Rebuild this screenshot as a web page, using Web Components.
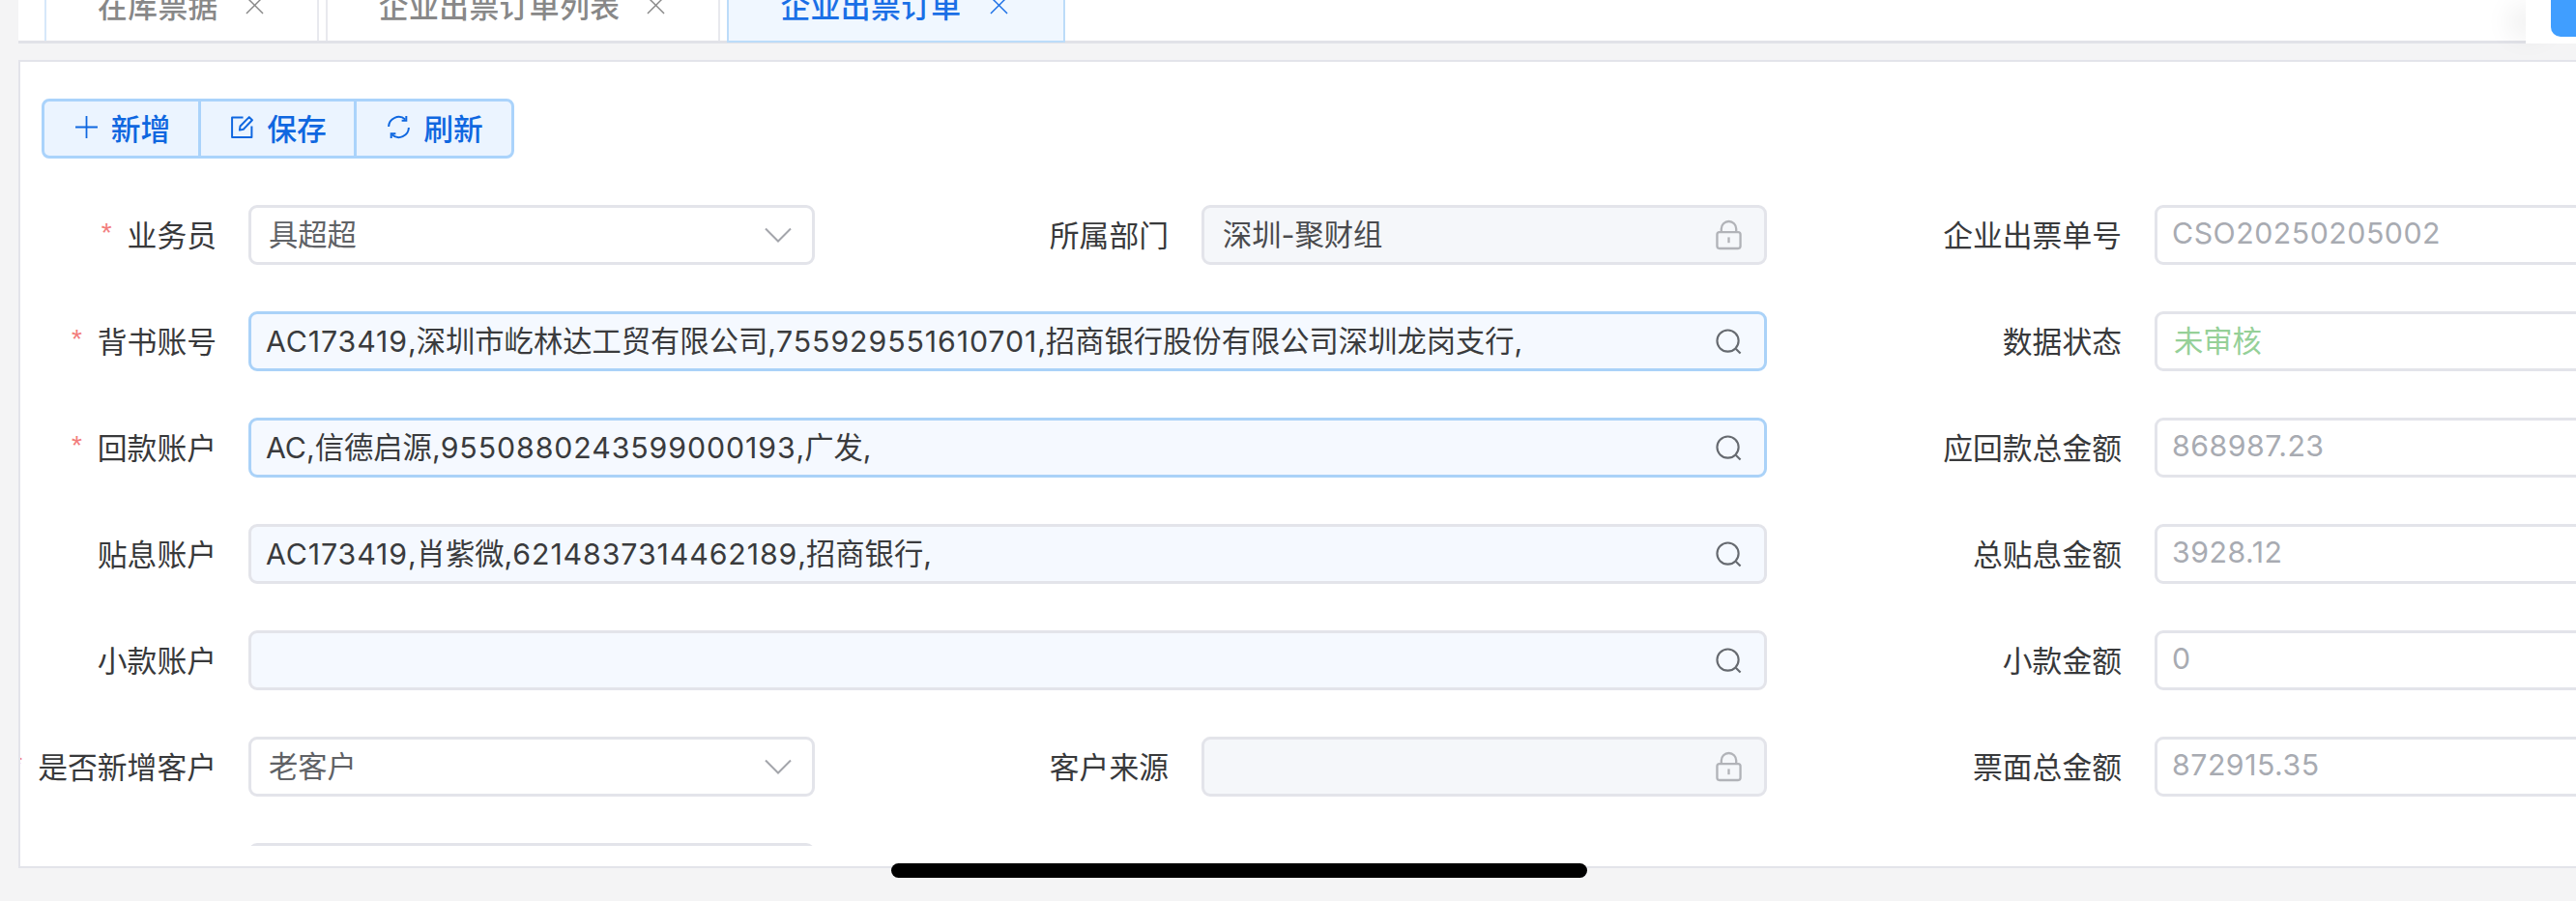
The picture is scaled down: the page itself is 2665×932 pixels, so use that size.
<!DOCTYPE html>
<html>
<head>
<meta charset="utf-8">
<style>
  html, body { margin: 0; height: 100%; overflow: hidden; background: #f4f4f5; }
  body {
    font-family: "Inter", "Noto Sans CJK SC", sans-serif;
    font-size: 30.8px;
    width: 2665px;
    height: 932px;
  }
  .n { letter-spacing: .9px; }
</style>
</head>
<body>
<order-page>
  <tab-bar>
    <tab-item first>在库票据</tab-item>
    <tab-item>企业出票订单列表</tab-item>
    <tab-item active>企业出票订单</tab-item>
  </tab-bar>
  <order-card>
    <button-group>
      <tool-button icon="plus">新增</tool-button>
      <tool-button icon="edit">保存</tool-button>
      <tool-button icon="refresh">刷新</tool-button>
    </button-group>
    <order-form>
      <form-item required label="业务员" kind="select">具超超</form-item>
      <form-item label="所属部门" kind="locked" inner>深圳-聚财组</form-item>
      <form-item label="企业出票单号" kind="plain" inner>CSO20250205002</form-item>

      <form-item required label="背书账号" kind="search" focus wide><span class="n">AC173419</span>,深圳市屹林达工贸有限公司,<span class="n">755929551610701</span>,招商银行股份有限公司深圳龙岗支行,</form-item>
      <form-item label="数据状态" kind="status" inner>未审核</form-item>

      <form-item required label="回款账户" kind="search" focus wide>AC,信德启源,<span class="n">9550880243599000193</span>,广发,</form-item>
      <form-item label="应回款总金额" kind="plain" inner>868987.23</form-item>

      <form-item label="贴息账户" kind="search" wide><span class="n">AC173419</span>,肖紫微,<span class="n">6214837314462189</span>,招商银行,</form-item>
      <form-item label="总贴息金额" kind="plain" inner>3928.12</form-item>

      <form-item label="小款账户" kind="search" wide></form-item>
      <form-item label="小款金额" kind="plain" inner>0</form-item>

      <form-item required label="是否新增客户" kind="select">老客户</form-item>
      <form-item label="客户来源" kind="locked" inner></form-item>
      <form-item label="票面总金额" kind="plain" inner>872915.35</form-item>

      <form-item kind="select" noicon></form-item>
    </order-form>
  </order-card>
  <home-bar></home-bar>
</order-page>

<script>
const icons = {
    plus: '<svg viewBox="0 0 24 24" width="25" height="25" fill="none" stroke="currentColor" stroke-width="1.7"><path d="M12 1v22M1 12h22"/></svg>',
    edit: '<svg viewBox="0 0 24 24" width="25" height="25" fill="none" stroke="currentColor" stroke-width="1.9" stroke-linejoin="round"><path d="M13 2.5H2v19.5h19.5V11"/><path d="M9.5 15l.6-4L19 2l3 3-8.7 9.2z"/></svg>',
    refresh: '<svg viewBox="0 0 24 24" width="25" height="25" fill="none" stroke="currentColor" stroke-width="1.9"><path d="M2 11.5A10 10 0 0 1 18.5 4.3"/><path d="M22 12.500A10 10 0 0 1 5.500 19.700"/><path d="M19.500 1v4.500H15M4.500 23v-4.500H9"/></svg>',
    chevron: '<svg viewBox="0 0 28 16" width="28" height="16" fill="none" stroke="#a3a5ab" stroke-width="2"><path d="M1 1.500l13 13 13-13"/></svg>',
    lock: '<svg viewBox="0 0 28 32" width="27" height="32" fill="none" stroke="#b1b3b8" stroke-width="2.400"><rect x="1.500" y="13" width="25" height="17.500" rx="2.500"/><path d="M6 13V9.500a8 8 0 0 1 16 0V13"/><path d="M14 18.500v6"/></svg>',
    search: '<svg viewBox="0 0 28 28" width="27" height="27" fill="none" stroke="#666a70" stroke-width="2.200"><circle cx="13" cy="13" r="11.500"/><path d="M21.500 21.500l5 5"/></svg>',
    close: '<svg viewBox="0 0 20 20" width="19" height="19" fill="none" stroke="currentColor" stroke-width="1.500"><path d="M1 1l18 18M19 1L1 19"/></svg>'
};

class OrderPage extends HTMLElement {
    constructor () {
        super();
        this.attachShadow({ mode: 'open' }).innerHTML = `
            <style>
                :host { display: flex; flex-direction: column; height: 932px; padding-left: 19px; }
            </style>
            <slot></slot>`;
    }
}

class TabBar extends HTMLElement {
    constructor () {
        super();
        this.attachShadow({ mode: 'open' }).innerHTML = `
            <style>
                :host {
                    display: flex;
                    height: 45px;
                    box-sizing: border-box;
                    border-bottom: 3px solid #e1e2e8;
                    background: #fff;
                    margin-bottom: 17px;
                    padding-left: 27px;
                    position: relative;
                }
                .tabs { display: flex; gap: 7px; height: 45px; }
                .more {
                    position: absolute;
                    top: 0;
                    right: 0;
                    width: 52px;
                    height: 45px;
                    background: #fff;
                    box-shadow: -24px 0 28px -8px rgba(0,0,0,.07);
                }
                .more i {
                    position: absolute;
                    left: 26px;
                    top: -10px;
                    width: 40px;
                    height: 48px;
                    border-radius: 10px;
                    background: #409eff;
                }
            </style>
            <div class="tabs"><slot></slot></div>
            <div class="more"><i></i></div>`;
    }
}

class TabItem extends HTMLElement {
    constructor () {
        super();
        this.attachShadow({ mode: 'open' }).innerHTML = `
            <style>
                :host {
                    display: flex;
                    align-items: flex-end;
                    gap: 28px;
                    height: 42px;
                    box-sizing: border-box;
                    overflow: hidden;
                    padding: 0 55px 20px 53px;
                    background: #fff;
                    color: #888;
                    font-weight: 500;
                    letter-spacing: .4px;
                    border: solid #e8e9ee;
                    border-width: 0 2px;
                    line-height: 31px;
                    white-space: nowrap;
                }
                :host([first]) { border-left-color: #d6e8fa; }
                :host([active]) {
                    background: #f0f7ff;
                    color: #1a6fe6;
                    border-color: #bcdcf9;
                    border-bottom: 2px solid #bcdcf9;
                    height: 44px;
                    gap: 29px;
                    padding-right: 57px;
                }
                svg { display: block; margin-bottom: 7px; flex: none; }
                span { display: block; }
            </style>
            <slot></slot><span>${icons.close}</span>`;
    }
}

class OrderCard extends HTMLElement {
    constructor () {
        super();
        this.attachShadow({ mode: 'open' }).innerHTML = `
            <style>
                :host {
                    display: block;
                    box-sizing: border-box;
                    width: 2700px;
                    height: 836px;
                    background: #fff;
                    border: 2px solid #e3e4ea;
                    padding: 38px 0 21px 22px;
                    overflow: hidden;
                }
            </style>
            <slot></slot>`;
    }
}

class ButtonGroup extends HTMLElement {
    constructor () {
        super();
        this.attachShadow({ mode: 'open' }).innerHTML = `
            <style>
                :host {
                    display: inline-flex;
                    height: 62px;
                    box-sizing: border-box;
                    border: 3px solid #aad3fb;
                    border-radius: 8px;
                    background: #ebf4ff;
                    vertical-align: top;
                }
            </style>
            <slot></slot>`;
    }
}

class ToolButton extends HTMLElement {
    constructor () {
        super();
        this.attachShadow({ mode: 'open' }).innerHTML = `
            <style>
                :host {
                    display: flex;
                    align-items: center;
                    justify-content: center;
                    gap: 13px;
                    width: 161px;
                    box-sizing: border-box;
                    padding: 0 0 3px 2px;
                    color: #0f67e0;
                    font-weight: 500;
                    font-size: 30.8px;
                    border-left: 3px solid #aad3fb;
                }
                :host(:first-child) { border-left: 0; width: 159px; }
                :host(:last-child) { width: 163px; }
                svg { display: block; }
            </style>
            ${icons[this.getAttribute('icon')]}<slot></slot>`;
    }
}

class OrderForm extends HTMLElement {
    constructor () {
        super();
        this.attachShadow({ mode: 'open' }).innerHTML = `
            <style>
                :host {
                    display: grid;
                    grid-template-columns: 821px 986px 986px;
                    grid-auto-rows: 62px;
                    row-gap: 48px;
                    margin-left: -22px;
                    margin-top: 48px;
                    height: 663px;
                    overflow: hidden;
                }
            </style>
            <slot></slot>`;
    }
}

class FormItem extends HTMLElement {
    constructor () {
        super();
        const kind = this.getAttribute('kind');
        const label = this.getAttribute('label') || '';
        let icon = '';
        if (!this.hasAttribute('noicon')) {
            if (kind === 'select') icon = icons.chevron;
            if (kind === 'locked') icon = icons.lock;
            if (kind === 'search') icon = icons.search;
        }
        this.attachShadow({ mode: 'open' }).innerHTML = `
            <style>
                :host {
                    display: grid;
                    grid-template-columns: 236px 1fr;
                    min-width: 0;
                }
                :host([inner]) { grid-template-columns: 401px 585px; }
                :host([wide]) { grid-column: span 2; grid-template-columns: 236px 1571px; }
                .label {
                    display: flex;
                    justify-content: flex-end;
                    align-items: center;
                    padding: 0 33px 4px 0;
                    color: #38393b;
                    white-space: nowrap;
                }
                :host([inner]) .label { padding-right: 34px; }
                .label b {
                    color: #f27c7c;
                    font-weight: 400;
                    font-size: 28px;
                    margin-right: 16px;
                    font-family: "Liberation Sans", sans-serif;
                }
                .box {
                    display: flex;
                    align-items: center;
                    justify-content: space-between;
                    box-sizing: border-box;
                    height: 62px;
                    padding: 0 21px 0 19px;
                    border: 3px solid #e3e4ea;
                    border-radius: 9px;
                    background: #fff;
                    color: #606266;
                    font-size: 30.3px;
                    white-space: nowrap;
                }
                .box span { padding-bottom: 4px; }
                .select { width: 586px; padding-left: 18px; padding-right: 21px; }
                .locked { background: #f5f7fa; color: #4a4b4e; padding-right: 23px; }
                .search { background: #f5f9ff; color: #3a3b3d; padding-left: 15px; padding-right: 23px; }
                .focus { border-color: #aad2f8; }
                .plain { color: #a8abb2; padding-left: 15px; letter-spacing: .5px; }
                .status { color: #95d098; padding-left: 17px; }
                svg { display: block; flex: none; }
            </style>
            <div class="label">${this.hasAttribute('required') ? '<b>*</b>' : ''}${label}</div>
            <div class="box ${kind}${this.hasAttribute('focus') ? ' focus' : ''}"><span><slot></slot></span>${icon}</div>`;
    }
}

class HomeBar extends HTMLElement {
    constructor () {
        super();
        this.attachShadow({ mode: 'open' }).innerHTML = `
            <style>
                :host {
                    position: absolute;
                    left: 922px;
                    top: 893px;
                    width: 720px;
                    height: 15px;
                    border-radius: 8px;
                    background: #000;
                }
            </style>`;
    }
}

customElements.define('order-page', OrderPage);
customElements.define('tab-bar', TabBar);
customElements.define('tab-item', TabItem);
customElements.define('order-card', OrderCard);
customElements.define('button-group', ButtonGroup);
customElements.define('tool-button', ToolButton);
customElements.define('order-form', OrderForm);
customElements.define('form-item', FormItem);
customElements.define('home-bar', HomeBar);
</script>
</body>
</html>
